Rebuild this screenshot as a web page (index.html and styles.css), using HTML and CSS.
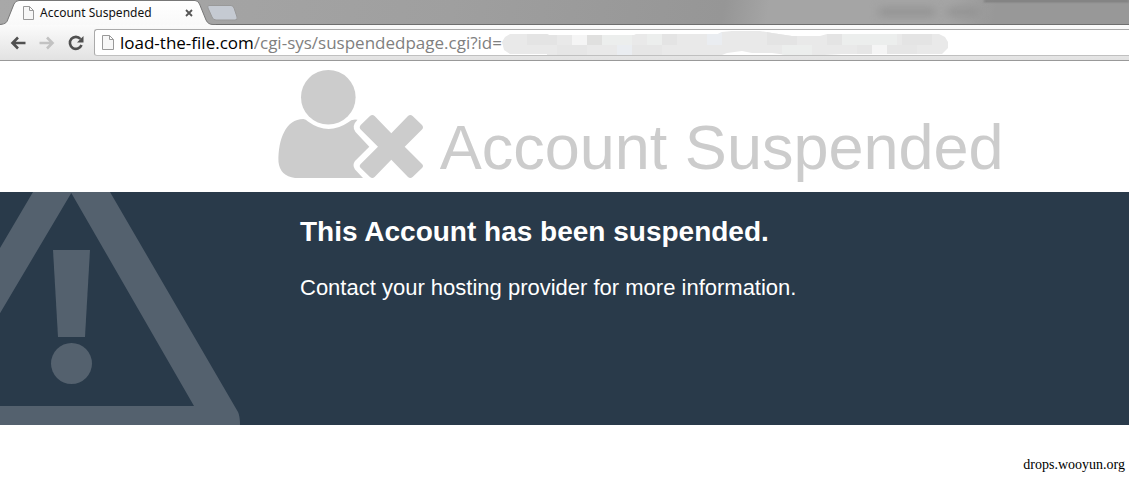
FILE: index.html
```
<!DOCTYPE html>
<html lang="en">
<head>
<meta charset="utf-8">
<title>Account Suspended</title>
<link rel="stylesheet" href="styles.css">
</head>
<body>
<header class="browser">
  <div class="tabstrip">
    <div class="tab">
      <svg class="tab-shape" viewBox="0 0 216 25" aria-hidden="true">
        <defs><linearGradient id="tabfill" x1="0" y1="0" x2="0" y2="1"><stop offset="0" stop-color="#fff"/><stop offset="1" stop-color="#f9f9f9"/></linearGradient></defs>
        <path d="M0 25V24.500C6 24 7 22 8 19L14 4Q15.500.5 19 .5H195Q198 .5 199.500 4L206 20Q208 24.500 213 24.500V25Z" fill="url(#tabfill)"/>
        <path d="M0 24.500C6 24 7 22 8 19L14 4Q15.500.5 19 .5H195Q198 .5 199.500 4L206 20Q208 24.500 213 24.500H216" fill="none" stroke="#777"/>
      </svg>
      <svg class="page-icon" width="11" height="14" viewBox="0 0 11 14" aria-hidden="true"><path d="M.5.5H6.500L10.500 4.500V13.500H.5ZM6.500.5V4.500H10.500" fill="#f7f7f7" stroke="#999"/></svg>
      <span class="tab-title">Account Suspended</span>
      <button class="close" aria-label="Close tab"><svg width="8" height="8" viewBox="0 0 8 8"><path d="M1 1L7 7M7 1L1 7" stroke="#555" stroke-width="1.800"/></svg></button>
    </div>
    <button class="new-tab" aria-label="New tab"><svg width="33" height="16" viewBox="0 0 33 16"><path d="M3 .5H25Q27 .5 28 3L31 12Q32 15 29 15H10Q7 15 6 12L2 3Q1 .5 3 .5Z" fill="#c5cad2" stroke="#999"/></svg></button>
    <div class="backdrop"><span class="shade"></span><span class="smudge"></span><span class="smudge smudge-small"></span></div>
  </div>
  <div class="toolbar">
    <button class="nav" aria-label="Back"><svg width="16" height="14" viewBox="0 0 16 14"><path d="M15.500 7H3M8 1.500L2.500 7L8 12.500" fill="none" stroke="#505050" stroke-width="2.600"/></svg></button>
    <button class="nav" aria-label="Forward"><svg width="16" height="14" viewBox="0 0 16 14"><path d="M.5 7H13M8 1.500L13.500 7L8 12.500" fill="none" stroke="#c2c2c2" stroke-width="2.600"/></svg></button>
    <button class="nav" aria-label="Reload"><svg width="16" height="16" viewBox="0 0 16 16"><path d="M12.500 4A6 6 0 1 0 13.500 10" fill="none" stroke="#505050" stroke-width="2.600"/><path d="M15.500 1V7.500H9Z" fill="#505050"/></svg></button>
    <div class="omnibox">
      <svg class="page-icon" width="12" height="15" viewBox="0 0 12 15" aria-hidden="true"><path d="M.5.5H7.500L11.500 4.500V14.500H.5ZM7.500.5V4.500H11.500" fill="#f7f7f7" stroke="#999"/></svg>
      <label class="host" for="address">load-the-file.com</label>
      <input class="path" id="address" type="text" value="/cgi-sys/suspendedpage.cgi?id=" spellcheck="false">
      <svg class="mosaic" width="446" height="26" viewBox="0 0 446 26" aria-hidden="true">
        <defs><clipPath id="blot"><path d="M0 12L3 7L8 4H45L47 5H132L134 4H216L220 2L230 1H258L270 3L290 6H318L325 4H437L443 7L446 12V18L440 24H340L322 25H285L270 23H250L240 21L225 23L220 25H45V24H8L2 20Z"/></clipPath></defs>
        <g clip-path="url(#blot)">
          <path fill="#e9e9e9" d="M0 0H446V26H0Z"/>
          <path fill="#e4e4e4" d="M25 0h30v15h-30zM160 0h15v15h-15zM265 0h30v15h-30zM325 0h15v15h-15zM400 0h30v15h-30z"/>
          <path fill="#f5f5f5" d="M70 0h15v15h-15zM370 15h15v11h-15z"/>
          <path fill="#e0e0df" d="M85 0h15v15h-15z"/>
          <path fill="#eceeed" d="M100 0h30v15h-30zM145 0h15v15h-15zM280 15h30v11h-30zM340 0h55v15h-55z"/>
          <path fill="#e6e6e6" d="M55 15h30v11h-30zM130 15h30v11h-30zM355 15h15v11h-15zM385 15h30v11h-30z"/>
          <path fill="#eaedf1" d="M115 15h15v11h-15zM205 0h15v15h-15z"/>
        </g>
      </svg>
    </div>
  </div>
</header>
<main>
  <div class="heading">
    <svg class="user-icon" width="146" height="109" viewBox="0 0 146 109" aria-hidden="true">
      <g fill="#ccc"><circle cx="50.300" cy="27.300" r="27.300"/>
      <path d="M25.300 49Q28 49 30 51.500Q50 66 70 52.500Q74 48.500 79.500 49.700Q73 56 77.500 62L91.300 76.700L77 91Q74 95 77 99.500L85 108H17Q2 106 .5 92C0 69 8 49 25.300 49Z"/>
      <path d="M92 46Q94.300 44 96.600 46L113.300 63.300L130 46Q132.300 44 134.600 46L144 55Q146 57.300 144 59.600L126.700 76.700L144 94Q146 96 144 98L134.600 107Q132.300 109 130 107L113.300 89.700L96.600 107Q94.300 109 92 107L82.700 98Q80.700 96 82.700 94L100 76.700L82.700 59.600Q80.700 57.300 82.700 55Z"/></g>
    </svg>
    <h1>Account Suspended</h1>
  </div>
  <section class="banner">
    <svg class="warning" width="240" height="233" viewBox="0 0 240 233" aria-hidden="true">
      <g fill="#54616e"><path fill-rule="evenodd" d="M-80 192L33 0H110L238 220Q240 224 240 233H-98ZM71.300 1L-55 214H194Z"/><path d="M53 58H90L85 145H58Z"/><circle cx="71.500" cy="171.500" r="20.500"/></g>
    </svg>
    <div class="message">
      <h2>This Account has been suspended.</h2>
      <p>Contact your hosting provider for more information.</p>
    </div>
  </section>
</main>
<footer>drops.wooyun.org</footer>
</body>
</html>
```
FILE: styles.css
```
* { box-sizing: border-box; }
body { margin: 0; background: #fff; font-family: "Liberation Sans", Arial, sans-serif; }
svg { display: block; flex-shrink: 0; }
button { padding: 0; border: 0; background: none; }
h1, h2, p { margin: 0; }
.browser { font-family: "Noto Sans", "Open Sans", sans-serif; border-bottom: 1px solid #999; }
.tabstrip { display: flex; height: 25px; background: linear-gradient(100deg, #a8a8a8, #9f9f9f 40%, #969696 64%, #a5a5a5 68%, #a5a5a5 84%, #989898 88%); border-bottom: 1px solid #6e6e6e; }
.tab { position: relative; display: flex; align-items: center; width: 204px; height: 25px; padding: 0 11px 0 23px; }
.tab-shape { position: absolute; left: 0; top: 0; width: 216px; height: 25px; }
.tab .page-icon, .tab-title, .close { position: relative; }
.tab-title { flex: 1; padding-left: 6px; font-size: 12px; line-height: 24px; color: #111; white-space: nowrap; }
.new-tab { align-self: flex-start; padding: 5px 0 0 2px; }
.backdrop { flex: 1; display: flex; justify-content: flex-end; align-items: center; gap: 12px; padding-right: 150px; position: relative; }
.shade { position: absolute; right: 0; top: 0; width: 145px; height: 2px; background: #777; filter: blur(1px); }
.smudge { width: 56px; height: 8px; background: #929292; filter: blur(4px); }
.smudge-small { width: 32px; }
.toolbar { display: flex; align-items: center; height: 35px; padding-left: 9px; background: linear-gradient(#fbfbfb, #e2e2e2); }
.nav { display: flex; justify-content: center; width: 29px; }
.nav:first-child { width: 18px; margin-right: 5px; }
.nav:nth-child(3) { margin-right: 4px; }
.omnibox { flex: 1; min-width: 0; display: flex; align-items: center; height: 27px; padding-left: 7px; background: #fff; border: 1px solid #aaa; border-right: 0; border-bottom-color: #c0c0c0; border-radius: 3px 0 0 3px; font-family: "Open Sans", "Noto Sans", sans-serif; font-size: 17px; line-height: 24px; }
.host { padding-left: 6px; color: #000; white-space: nowrap; }
.path { width: 252px; padding: 0; border: 0; outline: 0; background: none; color: #808080; font: inherit; }
.mosaic { margin-left: -4px; }
.heading { display: flex; align-items: flex-end; height: 131px; padding: 0 0 13px 24.600%; }
h1 { padding: 0 0 2px 16px; font-size: 63px; line-height: 60px; font-weight: 400; color: #ccc; white-space: nowrap; }
.banner { display: flex; background: #293a4a; color: #fff; }
.message { padding: 21px 0 0 60px; }
h2 { font-size: 28px; line-height: 38px; }
p { padding-top: 24px; font-size: 22px; line-height: 26px; }
footer { padding: 32px 4px 0 0; text-align: right; font-family: "Liberation Serif", "Times New Roman", serif; font-size: 14px; line-height: 16px; color: #000; }
```
